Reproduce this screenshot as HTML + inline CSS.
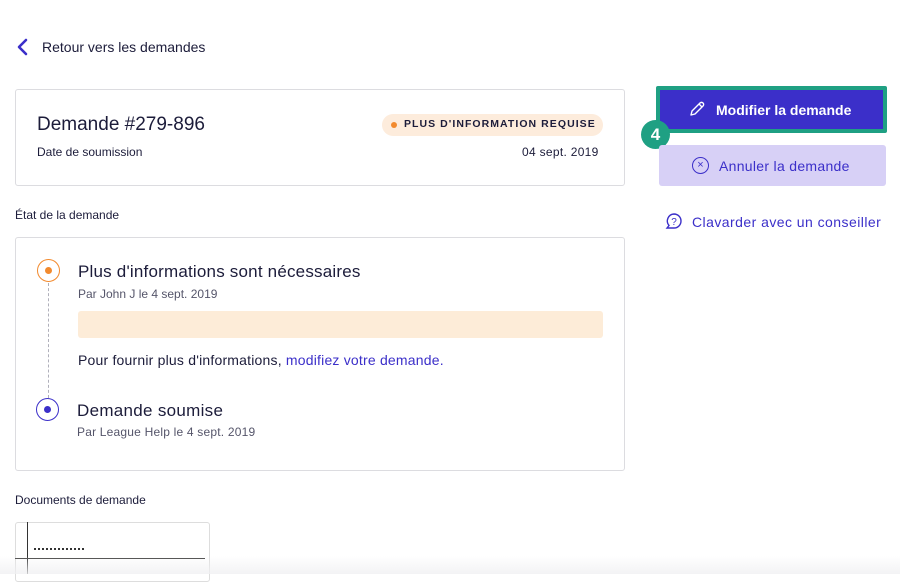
<!DOCTYPE html>
<html><head><meta charset="utf-8"><style>
*{margin:0;padding:0;box-sizing:border-box}
body{width:900px;height:574px;overflow:hidden;background:#fff;font-family:"Liberation Sans",sans-serif;color:#1c1c3a;position:relative}
.a{position:absolute}
.card{border:1px solid #dcdce0;border-radius:3px;background:#fff}
</style></head><body>
<svg class="a" style="left:16px;top:38px" width="14" height="18" viewBox="0 0 14 18"><path d="M10 2L3 9l7 7" stroke="#3b2fc9" stroke-width="2.6" fill="none" stroke-linecap="round" stroke-linejoin="round"/></svg>
<div class="a" style="left:42px;top:39px;font-size:14px;color:#1c1c3a">Retour vers les demandes</div>

<div class="a card" style="left:15px;top:89px;width:610px;height:97px"></div>
<div class="a" style="left:37px;top:114px;font-size:19px;font-weight:500">Demande #279-896</div>
<div class="a" style="left:37px;top:145px;font-size:12px">Date de soumission</div>
<div class="a" style="left:382px;top:114px;width:221px;height:22px;background:#fdecdc;border-radius:11px"></div>
<div class="a" style="left:391px;top:122px;width:6px;height:6px;border-radius:50%;background:#f28a2e"></div>
<div class="a" style="left:404px;top:118px;font-size:10.5px;font-weight:bold;letter-spacing:1.05px">PLUS D'INFORMATION REQUISE</div>
<div class="a" style="left:522px;top:145px;font-size:12px;letter-spacing:.3px">04 sept. 2019</div>

<div class="a" style="left:15px;top:208px;font-size:12px">État de la demande</div>
<div class="a card" style="left:15px;top:237px;width:610px;height:234px"></div>
<div class="a" style="left:37px;top:259px;width:23px;height:23px;border:1.5px solid #f28a2e;border-radius:50%"></div>
<div class="a" style="left:45px;top:267px;width:7px;height:7px;border-radius:50%;background:#f28a2e"></div>
<div class="a" style="left:48px;top:283px;height:115px;border-left:1px dashed #b0b0bb"></div>
<div class="a" style="left:36px;top:398px;width:23px;height:23px;border:1.5px solid #3b2fc9;border-radius:50%"></div>
<div class="a" style="left:44px;top:406px;width:7px;height:7px;border-radius:50%;background:#3b2fc9"></div>
<div class="a" style="left:78px;top:262px;font-size:17px;letter-spacing:.2px">Plus d'informations sont nécessaires</div>
<div class="a" style="left:78px;top:287px;font-size:12px;color:#55556a">Par John J le 4 sept. 2019</div>
<div class="a" style="left:78px;top:311px;width:525px;height:27px;background:#fdecd8;border-radius:3px"></div>
<div class="a" style="left:78px;top:352px;font-size:14px;letter-spacing:.2px">Pour fournir plus d'informations, <span style="color:#3b2fc9">modifiez votre demande.</span></div>
<div class="a" style="left:77px;top:401px;font-size:17px;letter-spacing:.3px">Demande soumise</div>
<div class="a" style="left:77px;top:425px;font-size:12px;color:#55556a;letter-spacing:.2px">Par League Help le 4 sept. 2019</div>

<div class="a" style="left:15px;top:493px;font-size:12px">Documents de demande</div>
<div class="a" style="left:15px;top:522px;width:195px;height:60px;border:1px solid #ddd;border-radius:3px;background:#fff"></div>
<div class="a" style="left:27px;top:522px;width:1px;height:52px;background:#333"></div>
<div class="a" style="left:34px;top:548px;width:50px;height:4px;border-top:2px dotted #333"></div>
<div class="a" style="left:15px;top:558px;width:190px;height:1px;background:#444"></div>
<div class="a" style="left:0;top:556px;width:900px;height:18px;background:linear-gradient(rgba(255,255,255,0),rgba(240,240,242,.8))"></div>

<div class="a" style="left:656px;top:86px;width:231px;height:47px;background:#1fa083;border-radius:2px"></div>
<div class="a" style="left:660px;top:90px;width:223px;height:39px;background:#3b2fc9"></div>
<svg class="a" style="left:688px;top:100px" width="18" height="18" viewBox="0 0 18 18"><path d="M3 15l1-4 8-8a2 2 0 013 3l-8 8z M11 4l3 3" stroke="#fff" stroke-width="1.4" fill="none" stroke-linejoin="round"/></svg>
<div class="a" style="left:716px;top:102px;font-size:14px;font-weight:bold;color:#fff">Modifier la demande</div>
<div class="a" style="left:641px;top:120px;width:29px;height:29px;border-radius:50%;background:#1fa083;color:#fff;font-weight:bold;font-size:17px;text-align:center;line-height:29px">4</div>
<div class="a" style="left:659px;top:145px;width:227px;height:41px;background:#d7d0f6;border-radius:3px"></div>
<div class="a" style="left:692px;top:157px;width:17px;height:17px;border:1.5px solid #3b2fc9;border-radius:50%;color:#3b2fc9;font-size:11px;text-align:center;line-height:14px">×</div>
<div class="a" style="left:719px;top:158px;font-size:14px;color:#3b2fc9;letter-spacing:.3px">Annuler la demande</div>
<svg class="a" style="left:665px;top:212px" width="18" height="18" viewBox="0 0 18 18"><path d="M9 2a7 7 0 110 14H2l2-2.5A7 7 0 019 2z" stroke="#3b2fc9" stroke-width="1.4" fill="none"/><text x="9" y="13" font-size="10" text-anchor="middle" fill="#3b2fc9" font-family="Liberation Sans">?</text></svg>
<div class="a" style="left:692px;top:214px;font-size:14px;color:#3b2fc9;letter-spacing:.45px">Clavarder avec un conseiller</div>
</body></html>
